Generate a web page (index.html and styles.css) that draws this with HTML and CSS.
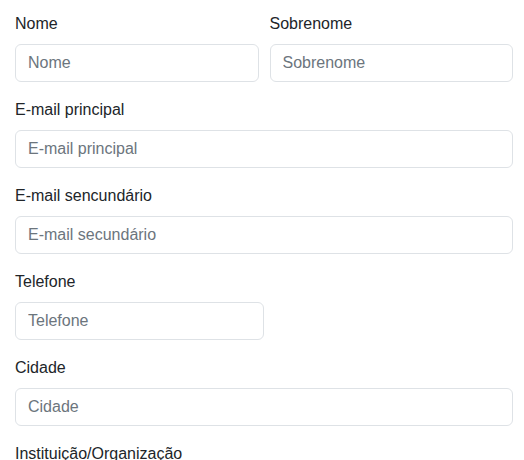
FILE: index.html
```html
<!DOCTYPE html>
<html lang="pt-BR">
<head>
    <meta charset="UTF-8">
    <meta name="viewport" content="width=device-width, initial-scale=1.0">
    <title>Cadastro</title>
    <link rel="stylesheet" href="styles.css">
</head>
<body>
    <form class="profile-form">
        <div class="row">
            <div class="field">
                <label for="nome">Nome</label>
                <input type="text" id="nome" placeholder="Nome">
            </div>
            <div class="field">
                <label for="sobrenome">Sobrenome</label>
                <input type="text" id="sobrenome" placeholder="Sobrenome">
            </div>
        </div>
        <div class="field">
            <label for="email1">E-mail principal</label>
            <input type="email" id="email1" placeholder="E-mail principal">
        </div>
        <div class="field">
            <label for="email2">E-mail sencundário</label>
            <input type="email" id="email2" placeholder="E-mail secundário">
        </div>
        <div class="field half">
            <label for="telefone">Telefone</label>
            <input type="text" id="telefone" placeholder="Telefone">
        </div>
        <div class="field">
            <label for="cidade">Cidade</label>
            <input type="text" id="cidade" placeholder="Cidade">
        </div>
        <div class="field">
            <label for="instituicao">Instituição/Organização</label>
            <input type="text" id="instituicao" placeholder="Instituição/Organização">
        </div>
    </form>
</body>
</html>
```

FILE: styles.css
```css
body {
    font-family: "Liberation Sans", Arial, sans-serif;
    font-size: 16px;
    line-height: 1.5;
    color: #212529;
    background-color: #fff;
    margin: 0;
    padding: 0;
}

.profile-form {
    width: 498px;
    padding: 12px 0 0 15px;
}

.row {
    display: grid;
    grid-template-columns: 1fr 1fr;
    column-gap: 11px;
}

.field {
    margin-bottom: 16px;
}

.field.half {
    width: 249px;
}

.field label {
    display: block;
    margin-bottom: 8px;
}

.field input {
    display: block;
    box-sizing: border-box;
    width: 100%;
    height: 38px;
    padding: 6px 12px;
    font-family: inherit;
    font-size: 16px;
    line-height: 1.5;
    color: #212529;
    background-color: #fff;
    border: 1px solid #dee2e6;
    border-radius: 6px;
    outline: none;
}

.field input::placeholder {
    color: #6c757d;
}
```
